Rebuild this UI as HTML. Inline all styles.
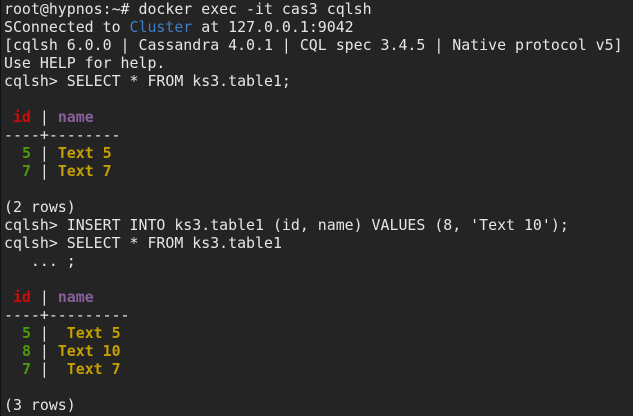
<!DOCTYPE html>
<html><head><style>
html,body{margin:0;padding:0;background:#242424;width:633px;height:416px;overflow:hidden}
body{border-left:1px solid #111;box-sizing:border-box}
pre{margin:0;padding:0 0 0 3px;font-family:"DejaVu Sans Mono","Liberation Mono",monospace;font-size:14.9px;line-height:18px;color:#e6e6e6;white-space:pre}
.b{color:#3f7fc7}.r{color:#d00b0b;font-weight:bold}.m{color:#8a5f9e;font-weight:bold}.g{color:#4e9a06;font-weight:bold}.y{color:#c4a000;font-weight:bold}
</style></head><body><pre>root@hypnos:~# docker exec -it cas3 cqlsh
SConnected to <span class="b">Cluster</span> at 127.0.0.1:9042
[cqlsh 6.0.0 | Cassandra 4.0.1 | CQL spec 3.4.5 | Native protocol v5]
Use HELP for help.
cqlsh&gt; SELECT * FROM ks3.table1;

 <span class="r">id</span> | <span class="m">name</span>
----+--------
  <span class="g">5</span> | <span class="y">Text 5</span>
  <span class="g">7</span> | <span class="y">Text 7</span>

(2 rows)
cqlsh&gt; INSERT INTO ks3.table1 (id, name) VALUES (8, 'Text 10');
cqlsh&gt; SELECT * FROM ks3.table1
   ... ;

 <span class="r">id</span> | <span class="m">name</span>
----+---------
  <span class="g">5</span> |  <span class="y">Text 5</span>
  <span class="g">8</span> | <span class="y">Text 10</span>
  <span class="g">7</span> |  <span class="y">Text 7</span>

(3 rows)</pre></body></html>
